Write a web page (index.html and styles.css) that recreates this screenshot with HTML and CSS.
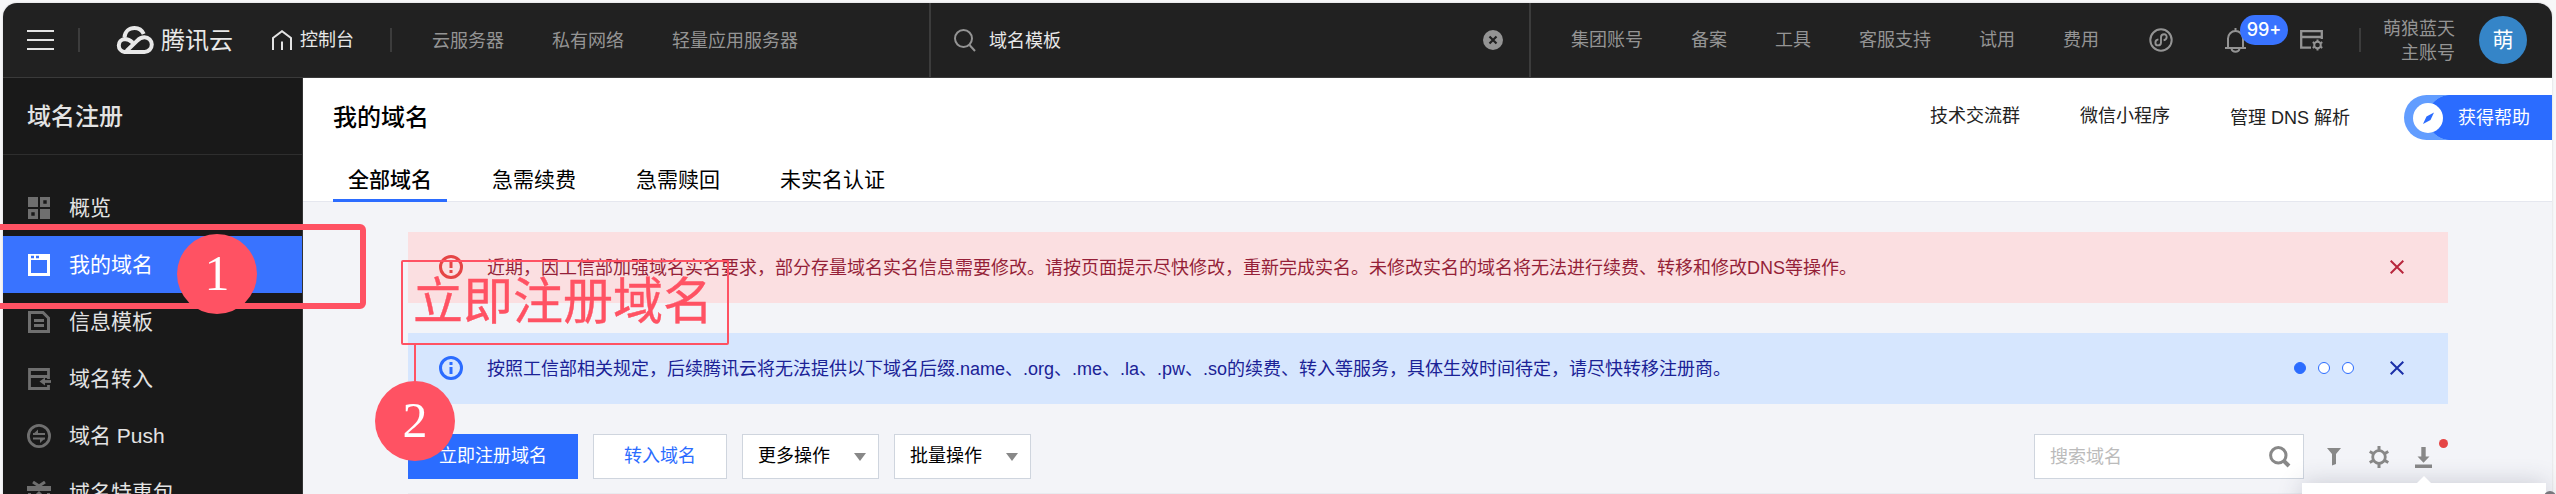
FILE: index.html
```html
<!DOCTYPE html>
<html lang="zh-CN">
<head>
<meta charset="utf-8">
<title>我的域名 - 域名注册</title>
<link rel="stylesheet" href="styles.css">
</head>
<body>
<div class="window">
  <header class="topbar">
    <svg class="menu-toggle" width="27" height="22" viewBox="0 0 27 22"><path d="M0 2h27M0 11h27M0 20h27" stroke="#e3e3e3" stroke-width="2" fill="none"/></svg>
    <i class="sep sep-a"></i>
    <a class="logo">
      <svg width="39" height="28" viewBox="0 0 39 28" fill="none" stroke="#e8e8e8" stroke-width="4"><path d="M9.500 11.300C10 5.600 14 2 19.500 2c4.200 0 7.700 2.500 9.200 6"/><path d="M17.500 16.500C15 14 12.500 13 9.500 13A6.500 6.500 0 0 0 9.500 25.900H29.500A7.300 7.300 0 0 0 29.500 11.300C26 11.300 24 12.800 22 14.800L11.500 25"/></svg>
      <span>腾讯云</span>
    </a>
    <a class="console">
      <svg width="20" height="21" viewBox="0 0 20 21" fill="none" stroke="#e3e3e3" stroke-width="2"><path d="M1 20V8L10 1.200 19 8v12M10 11.500V20"/></svg>
      <span>控制台</span>
    </a>
    <i class="sep sep-b"></i>
    <nav class="products"><a>云服务器</a><a>私有网络</a><a>轻量应用服务器</a></nav>
    <div class="search">
      <svg width="22" height="23" viewBox="0 0 22 23" fill="none" stroke="#949494" stroke-width="2"><circle cx="9.500" cy="9.500" r="8.500"/><path d="M15.500 16l5.500 6"/></svg>
      <span>域名模板</span>
      <svg class="clear" width="20" height="20" viewBox="0 0 20 20"><circle cx="10" cy="10" r="10" fill="#949494"/><path d="M6.500 6.500l7 7M13.500 6.500l-7 7" stroke="#212121" stroke-width="2.200"/></svg>
    </div>
    <nav class="tools"><a>集团账号</a><a>备案</a><a>工具</a><a>客服支持</a><a>试用</a><a>费用</a></nav>
    <svg class="ic-mini" width="24" height="24" viewBox="0 0 24 24" fill="none" stroke="#949494" stroke-width="2"><circle cx="12" cy="12" r="10.700"/><path d="M9.400 11.400c-4.200.6-3.600 6-.6 6 2 0 3.200-1.300 3.200-3V9.300c0-1.800 1.300-3 3.200-3 3.200 0 3.600 5.400-.6 6" stroke-width="1.900"/></svg>
    <div class="bell">
      <svg width="21" height="25" viewBox="0 0 21 25" fill="none" stroke="#949494" stroke-width="2"><path d="M10.500 0v3M0 20h21M3 20v-9.500a7.500 7.500 0 0 1 15 0V20M6.500 21c1 3.500 7 3.500 8 0"/></svg>
      <b class="badge">99+</b>
    </div>
    <svg class="ic-panel" width="24" height="21" viewBox="0 0 24 21" fill="none" stroke="#949494"><path d="M11 17.700H1.200V1.200h20.600V9M1 7h21" stroke-width="2.300"/><circle cx="17.500" cy="15" r="3.300" stroke-width="2"/><path d="M17.500 9.500v2M17.500 18.500v2M12.700 12.200l1.700 1M20.600 16.800l1.700 1M12.700 17.800l1.700-1M20.600 13.200l1.700-1" stroke-width="2"/></svg>
    <i class="sep sep-c"></i>
    <div class="account"><span>萌狼蓝天</span><span>主账号</span></div>
    <div class="avatar">萌</div>
  </header>
  <div class="body">
    <aside class="sidebar">
      <h2>域名注册</h2>
      <ul>
        <li><svg width="24" height="24" viewBox="0 0 24 24" fill="#6f6f6f"><path d="M1 1h10v10H1zM13 13h10v10H13z"/><path fill-rule="evenodd" d="M13 1h10v10H13zm3.300 3.300v3.400h3.400V4.300zM1 13h10v10H1zm3.300 3.300v3.400h3.400v-3.400z"/></svg>概览</li>
        <li class="active"><svg width="24" height="24" viewBox="0 0 24 24"><path fill="#fff" fill-rule="evenodd" d="M1 1h22v22H1zM4 7v13h16V7z"/><path d="M4 4h3M9 4h3" stroke="#3973ff" stroke-width="2.500"/></svg>我的域名</li>
        <li><svg width="24" height="24" viewBox="0 0 24 24" fill="none" stroke="#6f6f6f" stroke-width="3"><path d="M2.500 2.500h13.500L21.500 8v13.500h-19zM7 10.500h10M7 15.500h10"/></svg>信息模板</li>
        <li><svg width="24" height="24" viewBox="0 0 24 24" fill="none" stroke="#6f6f6f" stroke-width="2.800"><path d="M21.500 12V2.500h-19v19h19V18M2.500 9.500h19"/><path d="M24 14.500h-7" /><path d="M12.500 14.500l5.500-4v8z" fill="#6f6f6f" stroke="none"/></svg>域名转入</li>
        <li><svg width="24" height="24" viewBox="0 0 24 24" fill="none" stroke="#6f6f6f" stroke-width="2.800"><circle cx="12" cy="12" r="10.600"/><path d="M6 10h12M6 14.500h12" stroke-width="2"/><path d="M11 5.500v4.300H6.500zM13 19v-4.300h4.500z" fill="#6f6f6f" stroke="none"/></svg>域名 Push</li>
        <li><svg width="24" height="24" viewBox="0 0 24 24" fill="none" stroke="#6f6f6f" stroke-width="3"><path d="M0 7.500h24" stroke-width="5"/><path d="M6 1l6 4 6-4M2.500 12v9.500h19V12M8 16l4-4 4 4"/></svg>域名特惠包</li>
      </ul>
    </aside>
    <main class="main">
      <div class="page-head">
        <h1>我的域名</h1>
        <nav class="links"><a>技术交流群</a><a>微信小程序</a><a class="dns">管理 DNS 解析</a></nav>
        <a class="help"><svg width="30" height="30" viewBox="0 0 30 30"><circle cx="15" cy="15" r="15" fill="#fff"/><path d="M21 9.500l-3.500 7.500-7.500 4 3.500-7.500z" fill="#2b6cff"/></svg><span>获得帮助</span></a>
      </div>
      <div class="tabs"><a class="on">全部域名</a><a>急需续费</a><a>急需赎回</a><a>未实名认证</a></div>
      <div class="content">
        <div class="alert red">
          <svg width="24" height="24" viewBox="0 0 24 24" fill="none" stroke="#e54545" stroke-width="3"><circle cx="12" cy="12" r="10.500"/><path d="M12 6.500v6.500M12 15v3"/></svg>
          <p>近期，因工信部加强域名实名要求，部分存量域名实名信息需要修改。请按页面提示尽快修改，重新完成实名。未修改实名的域名将无法进行续费、转移和修改DNS等操作。</p>
          <svg class="close" width="14" height="14" viewBox="0 0 14 14"><path d="M.7.7l12.600 12.600M13.300.7L.7 13.300" stroke="#b8263c" stroke-width="2"/></svg>
        </div>
        <div class="alert blue">
          <svg width="24" height="24" viewBox="0 0 24 24" fill="none" stroke="#2b6cff" stroke-width="3"><circle cx="12" cy="12" r="10.500"/><path d="M12 6v3M12 11v7"/></svg>
          <p>按照工信部相关规定，后续腾讯云将无法提供以下域名后缀.name、.org、.me、.la、.pw、.so的续费、转入等服务，具体生效时间待定，请尽快转移注册商。</p>
          <div class="dots"><i class="on"></i><i></i><i></i></div>
          <svg class="close" width="14" height="14" viewBox="0 0 14 14"><path d="M.7.7l12.600 12.600M13.300.7L.7 13.300" stroke="#1b2fa8" stroke-width="2"/></svg>
        </div>
        <div class="actions">
          <button class="btn primary">立即注册域名</button>
          <button class="btn link">转入域名</button>
          <button class="btn drop">更多操作<i></i></button>
          <button class="btn drop">批量操作<i></i></button>
          <div class="find"><span>搜索域名</span><svg width="22" height="22" viewBox="0 0 22 22" fill="none" stroke="#888" stroke-width="3"><circle cx="9.300" cy="9.300" r="7.700"/><path d="M14.500 14.500l5.500 5.500" stroke-width="4"/></svg></div>
          <svg class="ic-filter" width="14" height="18" viewBox="0 0 14 18" fill="#888"><path d="M0 0h14L9 6v10l-4 1.500V6z"/></svg>
          <svg class="ic-gear" width="20" height="22" viewBox="0 0 20 22" fill="none" stroke="#888"><circle cx="10" cy="11" r="6.300" stroke-width="2.800"/><path d="M10 0v4M10 18v4M.7 5.500l3.500 2M15.800 14.500l3.500 2M.7 16.500l3.500-2M15.800 7.500l3.500-2" stroke-width="3"/></svg>
          <div class="download"><svg width="17" height="21" viewBox="0 0 17 21" fill="#888"><path d="M6.300 0h4.400v9.500h3.800l-6 6.300-6-6.300h3.800zM0 17.500h17V21H0z"/></svg><i class="dot"></i></div>
        </div>
        <div class="table-top"></div>
      </div>
    </main>
  </div>
</div>
<div class="popover"></div>
<div class="corner-knob"></div>
<div class="mark-frame"></div>
<div class="mark-label">立即注册域名</div>
<div class="mark-line"></div>
<div class="mark-num one">1</div>
<div class="mark-num two">2</div>
</body>
</html>
```
FILE: styles.css
```css
* { box-sizing: border-box; margin: 0; padding: 0; }
html { height: 494px; overflow: hidden; }
body {
  width: 2556px; height: 494px; overflow: hidden; position: relative;
  display: flow-root; background: #f7f7f8; color: #000;
  font: 18px/24px "Liberation Sans", "Noto Sans CJK SC", sans-serif;
  white-space: nowrap;
}
svg { display: block; flex: none; }
i { font-style: normal; }
.window {
  width: 2549px; height: 491px; margin: 3px 0 0 3px; overflow: hidden;
  border-radius: 14px 14px 0 0; background: #f3f4f8;
  box-shadow: 0 0 2px #c8c8cc;
}

/* Top bar */
.topbar {
  height: 75px; display: flex; align-items: center;
  background: #212121; border-bottom: 1px solid #3a3a3a; color: #949494;
}
.menu-toggle { margin-left: 24px; }
.sep { width: 2px; height: 24px; background: #3c3c3c; flex: none; }
.sep-a { margin-left: 24px; }
.logo { display: flex; align-items: center; margin-left: 35px; gap: 7px; color: #e8e8e8; font-size: 24px; line-height: 36px; width: 118px; }
.logo span { padding-top: 1px; }
.console { display: flex; align-items: center; gap: 8px; margin-left: 39px; color: #e8e8e8; width: 82px; }
.sep-b { margin-left: 36px; }
.products { display: flex; gap: 48px; margin-left: 40px; width: 497px; padding-top: 2px; }
.search {
  display: flex; align-items: center; width: 602px; height: 74px; padding: 0 26px 0 23px;
  border-left: 2px solid #3c3c3c; border-right: 2px solid #3c3c3c; color: #e8e8e8;
}
.search span { margin-left: 13px; padding-top: 2px; }
.clear { margin-left: auto; }
.tools { display: flex; gap: 48px; margin-left: 40px; width: 528px; }
.ic-mini { margin-left: 50px; }
.bell { position: relative; margin-left: 52px; }
.badge {
  position: absolute; left: 15px; top: -13px; width: 48px; height: 30px; border-radius: 15px;
  background: #3973ff; color: #fff; font: 500 18px/30px Inter, sans-serif; text-align: center;
}
.ic-panel { margin-left: 54px; margin-top: 1px; }
.sep-c { margin-left: 35px; }
.account { display: flex; flex-direction: column; align-items: flex-end; margin-left: 22px; width: 72px; padding-top: 1px; }
.avatar {
  width: 48px; height: 48px; border-radius: 50%; margin-left: 24px;
  background: #3585c8; color: #fff; font-size: 21px; line-height: 48px; text-align: center;
}

/* Layout */
.body { display: flex; height: 416px; overflow: hidden; }
.sidebar { width: 300px; background: #191919; border-right: 1px solid #333; color: #e3e3e3; flex: none; }
.sidebar h2 { height: 77px; padding: 21px 0 0 24px; font-size: 24px; line-height: 36px; font-weight: 500; border-bottom: 1px solid #2e2e2e; }
.sidebar ul { list-style: none; padding-top: 24px; }
.sidebar li { height: 57px; display: flex; align-items: center; gap: 18px; padding-left: 24px; font-size: 21px; }
.sidebar .active { background: #3973ff; color: #fff; }
.main { flex: 1; min-width: 0; }
.page-head { height: 77px; display: flex; background: #fff; padding-left: 30px; }
.page-head h1 { font-size: 24px; line-height: 36px; font-weight: 500; padding-top: 22px; width: 1597px; }
.links { display: flex; gap: 60px; padding-top: 26px; width: 474px; color: #222; }
.links .dns { padding-top: 2px; }
.help {
  display: flex; align-items: center; gap: 15px; width: 148px; height: 45px; margin-top: 17px; padding-left: 9px;
  border-radius: 23px 0 0 23px; color: #fff;
  background: radial-gradient(circle at 46px 50%, #2b6cff 22px, transparent 22.500px), linear-gradient(90deg, #629dff 45px, #2b6cff 45px);
}
.tabs { height: 47px; display: flex; gap: 30px; padding: 0 30px; background: #fff; border-bottom: 1px solid #e5e7ef; font-size: 21px; line-height: 50px; }
.tabs a { padding: 0 15px; height: 47px; }
.tabs .on { border-bottom: 3px solid #2b6cff; font-weight: 500; }

/* Content */
.content { padding: 30px 104px 0 105px; }
.alert { height: 71px; display: flex; align-items: center; padding: 0 44px 0 31px; margin-bottom: 30px; }
.alert p { flex: 1; margin-left: 24px; padding-top: 1px; }
.alert > svg:first-child, .close, .dots { margin-top: -1px; }
.red { background: #fbdfe1; color: #951f38; }
.blue { background: #d6e6fe; color: #1b2296; }
.dots { display: flex; gap: 12px; margin-right: 36px; }
.dots i { width: 12px; height: 12px; border-radius: 50%; border: 1px solid #2b6cff; background: #fff; }
.dots .on { background: #2b6cff; }
.actions { display: flex; align-items: center; height: 45px; }
.btn { height: 45px; margin-right: 15px; border: 1px solid #cfd5de; background: #fff; font: inherit; line-height: 40px; padding-bottom: 2px; color: #000; }
.primary { width: 170px; border-color: #2b6cff; background: #2b6cff; color: #fff; }
.link { width: 134px; color: #2b6cff; }
.drop { width: 137px; display: flex; align-items: center; justify-content: space-between; padding: 0 12px 2px 15px; }
.drop i { border: 6px solid transparent; border-top: 8px solid #888; border-bottom: 0; margin-top: 2px; }
.find { width: 270px; height: 45px; margin-left: auto; display: flex; align-items: center; justify-content: space-between; padding: 0 12px 0 15px; background: #fff; border: 1px solid #cfd5de; color: #bbb; }
.ic-filter { margin-left: 23px; }
.ic-gear { margin-left: 28px; }
.download { position: relative; margin: 2px 16px 0 26px; }
.dot { position: absolute; left: 24px; top: -8px; width: 9px; height: 9px; border-radius: 50%; background: #e54545; }
.table-top { margin-top: 14px; border-top: 1px solid #e9ebf0; }

/* Export popover */
.popover { position: absolute; left: 2302px; top: 483px; width: 244px; height: 40px; background: #fff; box-shadow: 0 0 24px rgba(50, 55, 80, .22); }
.popover::before { content: ""; position: absolute; left: 115px; top: -7px; border: 7px solid transparent; border-bottom-color: #fff; border-top: 0; }
.corner-knob { position: absolute; left: 2544px; top: 491px; width: 12px; height: 12px; border-radius: 50%; background: #77777c; }

/* Annotations */
.mark-frame { position: absolute; left: -6px; top: 224px; width: 372px; height: 85px; border: 6px solid #ff5263; border-radius: 6px; }
.mark-label { position: absolute; left: 401px; top: 260px; width: 328px; height: 85px; padding-left: 10px; border: 2px solid #ff5263; border-radius: 2px; color: #ff5263; font-size: 50px; line-height: 80px; -webkit-text-stroke: .4px #ff5263; }
.mark-line { position: absolute; left: 414px; top: 345px; width: 2px; height: 40px; background: #ff5263; }
.mark-num { position: absolute; width: 80px; height: 80px; border-radius: 50%; background: #ff5263; color: #fff; font: 50px/78px "Liberation Serif", serif; text-align: center; }
.one { left: 177px; top: 234px; }
.two { left: 375px; top: 381px; }
```
